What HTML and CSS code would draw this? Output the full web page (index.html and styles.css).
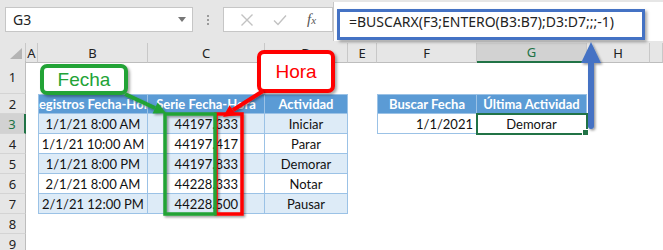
FILE: index.html
```html
<!DOCTYPE html>
<html>
  <head>
    <meta charset="utf-8">
    <link rel="stylesheet" href="styles.css">
  </head>
  <body>
    <div class="bar">
      <div class="namebox">
        <span>G3</span>
        <span class="caret"></span>
      </div>
      <div class="grip"><i></i><i></i><i></i></div>
      <div class="buttons">
        <svg width="14" height="14" viewBox="0 0 14 14"><path d="M1.5 1.5L12.5 12.5M12.5 1.5L1.5 12.5" stroke="#c2c2c2" stroke-width="1.4" fill="none"/></svg>
        <svg width="14" height="12" viewBox="0 0 14 12"><path d="M1 6.5L5 10.5L13 1.5" stroke="#c2c2c2" stroke-width="1.4" fill="none"/></svg>
        <span class="fx">f<small>x</small></span>
      </div>
      <div class="formula">=BUSCARX(F3;ENTERO(B3:B7);D3:D7;;;-1)</div>
    </div>

    <div class="sheet">
      <div class="row head">
        <div class="ch corner"></div>
        <div class="ch">A</div>
        <div class="ch">B</div>
        <div class="ch">C</div>
        <div class="ch">D</div>
        <div class="ch">E</div>
        <div class="ch">F</div>
        <div class="ch sel">G</div>
        <div class="ch">H</div>
        <div class="ch"></div>
      </div>
      <div class="row tall">
        <div class="rh">1</div>
        <div></div><div></div><div></div><div></div><div></div><div></div><div></div><div></div><div></div>
      </div>
      <div class="row">
        <div class="rh">2</div>
        <div></div>
        <div class="c t th first ctr">Registros Fecha-Hora</div>
        <div class="c t th ctr">Serie Fecha-Hora</div>
        <div class="c t th ctr">Actividad</div>
        <div></div>
        <div class="c t th first ctr">Buscar Fecha</div>
        <div class="c t th ctr">Última Actividad</div>
        <div></div><div></div>
      </div>
      <div class="row">
        <div class="rh sel">3</div>
        <div></div>
        <div class="c t band first ctr">1/1/21 8:00 AM</div>
        <div class="c t band num">44197.333</div>
        <div class="c t band ctr">Iniciar</div>
        <div></div>
        <div class="c t first rt">1/1/2021</div>
        <div class="c t ctr active">Demorar</div>
        <div></div><div></div>
      </div>
      <div class="row">
        <div class="rh">4</div>
        <div></div>
        <div class="c t first ctr">1/1/21 10:00 AM</div>
        <div class="c t num">44197.417</div>
        <div class="c t ctr">Parar</div>
        <div></div><div></div><div></div><div></div><div></div>
      </div>
      <div class="row">
        <div class="rh">5</div>
        <div></div>
        <div class="c t band first ctr">1/1/21 8:00 PM</div>
        <div class="c t band num">44197.833</div>
        <div class="c t band ctr">Demorar</div>
        <div></div><div></div><div></div><div></div><div></div>
      </div>
      <div class="row">
        <div class="rh">6</div>
        <div></div>
        <div class="c t first ctr">2/1/21 8:00 AM</div>
        <div class="c t num">44228.333</div>
        <div class="c t ctr">Notar</div>
        <div></div><div></div><div></div><div></div><div></div>
      </div>
      <div class="row">
        <div class="rh">7</div>
        <div></div>
        <div class="c t band first ctr">2/1/21 12:00 PM</div>
        <div class="c t band num">44228.500</div>
        <div class="c t band ctr">Pausar</div>
        <div></div><div></div><div></div><div></div><div></div>
      </div>
      <div class="row">
        <div class="rh">8</div>
        <div></div><div></div><div></div><div></div><div></div><div></div><div></div><div></div><div></div>
      </div>
      <div class="row">
        <div class="rh">9</div>
        <div></div><div></div><div></div><div></div><div></div><div></div><div></div><div></div><div></div>
      </div>
    </div>

    <!-- annotations drawn over the sheet -->
    <div class="hl"></div>
    <div class="callout fecha">Fecha</div>
    <div class="callout hora">Hora</div>
    <svg class="marks" width="663" height="250" viewBox="0 0 663 250">
      <defs>
        <filter id="sh" x="-20%" y="-20%" width="140%" height="140%">
          <feDropShadow dx="1.5" dy="1.5" stdDeviation="1.2" flood-color="#000" flood-opacity="0.4"/>
        </filter>
      </defs>
      <g filter="url(#sh)">
        <rect x="216" y="114" width="26" height="100" fill="none" stroke="#ff0000" stroke-width="3.5"/>
        <rect x="165" y="114" width="50" height="100" fill="none" stroke="#22a336" stroke-width="3.5"/>
        <line x1="125" y1="94" x2="155" y2="108" stroke="#22a336" stroke-width="4"/>
        <polygon points="166,113 152.6,113.4 157.6,102.6" fill="#22a336"/>
        <line x1="263" y1="91" x2="233" y2="110" stroke="#ff0000" stroke-width="4"/>
        <polygon points="223,117 229.5,105.3 236.3,115.1" fill="#ff0000"/>
        <line x1="591" y1="126" x2="591" y2="60" stroke="#4472c4" stroke-width="6" stroke-linecap="round"/>
        <polygon points="591,42 581,63 601,63" fill="#4472c4"/>
      </g>
    </svg>
  </body>
</html>
```

FILE: styles.css
```css
* {
  margin: 0;
  padding: 0;
  box-sizing: border-box;
}
body {
  position: relative;
  width: 663px;
  height: 250px;
  overflow: hidden;
  background-color: white;
  font-family: "Noto Sans", sans-serif;
  color: #222;
}

/* formula bar */
.bar {
  display: flex;
  align-items: flex-start;
  height: 43px;
  background-color: #e6e6e6;
}
.namebox {
  display: flex;
  align-items: center;
  justify-content: space-between;
  width: 188px;
  height: 25px;
  margin: 7px 0 0 5px;
  padding: 0 6px 0 7px;
  background-color: white;
  border: 1px solid #c6c6c6;
  font-size: 14px;
}
.caret {
  border-left: 4px solid transparent;
  border-right: 4px solid transparent;
  border-top: 5px solid #777;
}
.grip {
  display: flex;
  flex-direction: column;
  align-items: center;
  gap: 2px;
  width: 30px;
  padding-top: 15px;
}
.grip i {
  width: 2px;
  height: 2px;
  background-color: #9a9a9a;
}
.buttons {
  display: flex;
  align-items: center;
  justify-content: space-around;
  width: 110px;
  height: 25px;
  margin-top: 7px;
  padding: 0 6px;
  background-color: white;
  border: 1px solid #c6c6c6;
}
.fx {
  font-family: "Liberation Serif", serif;
  font-style: italic;
  font-size: 15px;
  color: #555;
}
.fx small {
  font-size: 11px;
}
.formula {
  flex: 1;
  height: 39px;
  margin-top: 2px;
  padding: 10px 0 0 15px;
  background-color: white;
  border-left: 1px solid #c6c6c6;
  font-size: 14px;
  white-space: nowrap;
}

/* grid */
.row {
  display: grid;
  grid-template-columns: 26px 12px 110px 117px 83px 29px 100px 110px 63px 1fr;
  height: 20px;
}
.row.head {
  height: 18px;
}
.row.tall {
  height: 33px;
}
.ch {
  display: flex;
  align-items: center;
  justify-content: center;
  background-color: #e6e6e6;
  border-right: 1px solid #c8c8c8;
  border-bottom: 1px solid #bdbdbd;
  font-size: 13px;
}
.ch.sel {
  background-color: #d2d2d2;
  color: #217346;
  border-bottom: 2px solid #217346;
}
.corner {
  align-items: flex-end;
  justify-content: flex-end;
  padding: 0 3px 3px 0;
}
.corner::after {
  content: "";
  width: 12px;
  height: 11px;
  background-color: #b4b4b4;
  clip-path: polygon(100% 0, 100% 100%, 0 100%);
}
.rh {
  display: flex;
  align-items: center;
  justify-content: center;
  background-color: #e6e6e6;
  border-right: 1px solid #bdbdbd;
  border-bottom: 1px solid #d4d4d4;
  font-size: 13px;
}
.rh.sel {
  background-color: #d2d2d2;
  color: #217346;
  border-right: 2px solid #217346;
}

/* cells */
.c {
  display: flex;
  align-items: center;
  padding: 0 3px;
  overflow: hidden;
  white-space: nowrap;
  font-family: Lato, sans-serif;
  font-size: 13px;
  color: #111;
}
.t {
  border-right: 1px solid #9bc2e6;
  border-bottom: 1px solid #9bc2e6;
}
.t.first {
  border-left: 1px solid #9bc2e6;
}
.th {
  background-color: #5b9bd5;
  border-top: 1px solid #9bc2e6;
  color: white;
  font-weight: bold;
}
.band {
  background-color: #ddebf7;
}
.ctr {
  justify-content: center;
}
.rt {
  justify-content: flex-end;
}
.num {
  justify-content: flex-end;
  padding-right: 26px;
}
.active {
  position: relative;
  overflow: visible;
  outline: 2px solid #217346;
  outline-offset: -1px;
}
.active::after {
  content: "";
  position: absolute;
  right: -3px;
  bottom: -3px;
  width: 5px;
  height: 5px;
  background-color: #217346;
  border: 1px solid white;
}

/* annotations */
.hl {
  position: absolute;
  left: 337px;
  top: 9px;
  width: 308px;
  height: 31px;
  border: 3px solid #4472c4;
  box-shadow: 2px 2px 3px rgba(0, 0, 0, 0.35);
}
.callout {
  position: absolute;
  display: flex;
  align-items: center;
  justify-content: center;
  background-color: white;
  border: 4px solid;
  border-radius: 7px;
  box-shadow: 2px 2px 3px rgba(0, 0, 0, 0.35);
  font-family: "Liberation Sans", sans-serif;
  font-size: 19px;
}
.fecha {
  left: 40px;
  top: 64px;
  width: 88px;
  height: 31px;
  border-color: #22a336;
  color: #22a336;
}
.hora {
  left: 257px;
  top: 50px;
  width: 78px;
  height: 43px;
  border-color: #ff0000;
  color: #ff0000;
}
.marks {
  position: absolute;
  left: 0;
  top: 0;
  pointer-events: none;
}
```
